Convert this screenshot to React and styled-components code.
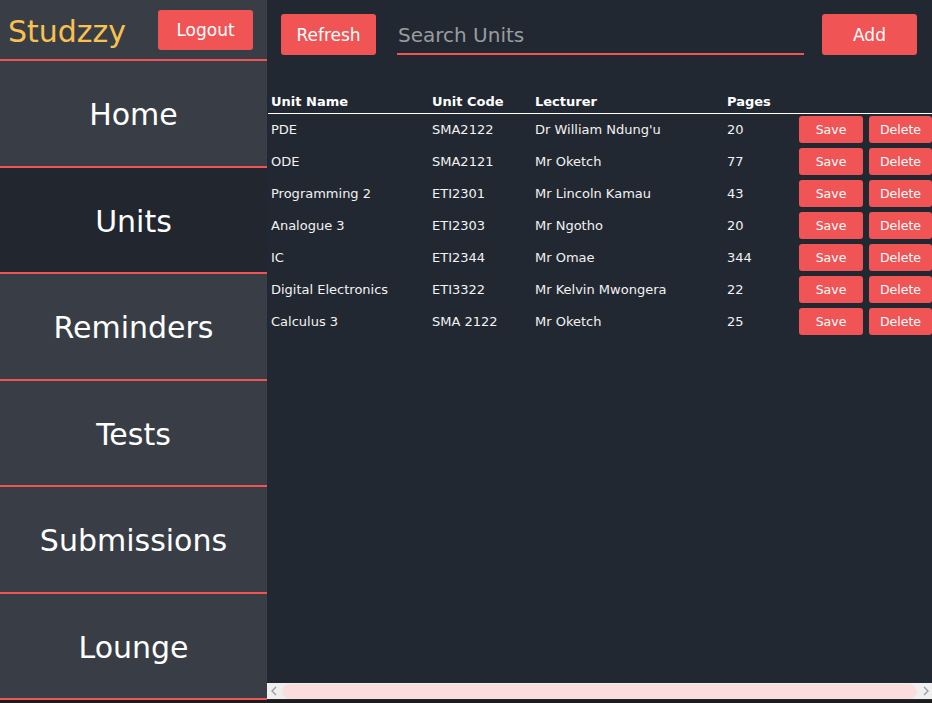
import React from "react";
import styled, { createGlobalStyle } from "styled-components";

const Global = createGlobalStyle`
  html, body { margin: 0; padding: 0; background: #1c1c1c; }
  body { font-family: "DejaVu Sans", Verdana, sans-serif; overflow: hidden; }
  * { box-sizing: border-box; }
`;

const RED = "#f05454";

const Shell = styled.div`
  display: flex;
  width: 932px;
  height: 700px;
`;

const Sidebar = styled.aside`
  width: 267px;
  flex-shrink: 0;
  display: flex;
  flex-direction: column;
  background: #393e46;
`;

const Brand = styled.header`
  height: 61px;
  flex-shrink: 0;
  display: flex;
  align-items: center;
  justify-content: space-between;
  padding: 0 14px 0 8px;
  border-bottom: 2px solid ${RED};
`;

const Logo = styled.h1`
  margin: 0;
  padding-top: 3px;
  font-size: 30px;
  font-weight: normal;
  color: #f9c24f;
`;

const Button = styled.button`
  font-family: inherit;
  border: none;
  border-radius: 3px;
  background: ${RED};
  color: #ffffff;
  cursor: pointer;
  font-size: ${(p) => p.$size || 17}px;
  width: ${(p) => p.$width}px;
  height: ${(p) => p.$height || 41}px;
  padding: ${(p) => (p.$small ? "1px 0 0" : "0")};
  flex-shrink: 0;
`;

const NavItem = styled.a`
  flex: 1;
  display: flex;
  align-items: center;
  justify-content: center;
  padding-top: 3px;
  font-size: 30px;
  color: #ffffff;
  text-decoration: none;
  border-bottom: 2px solid ${RED};
  background: ${(p) => (p.$active ? "#21262f" : "#393e46")};
`;

const Main = styled.main`
  flex: 1;
  min-width: 0;
  height: 700px;
  background: #222831;
  display: flex;
  flex-direction: column;
`;

const Viewport = styled.div`
  flex: 1;
  min-height: 0;
  overflow: hidden;
  padding-top: 14px;
`;

const ScrollTrack = styled.div`
  height: 16px;
  flex-shrink: 0;
  display: flex;
  align-items: center;
  background: #efefef;
  margin-bottom: 1px;
`;

const ScrollArrow = styled.div`
  width: 13px;
  height: 16px;
  flex-shrink: 0;
  display: flex;
  align-items: center;
  justify-content: center;
`;

const ScrollThumb = styled.div`
  flex: 1;
  height: 15px;
  margin: 0 2px;
  background: #fcdcdc;
  border: 1px solid #f4e2e2;
  border-radius: 8px;
`;

const Toolbar = styled.div`
  display: flex;
  align-items: center;
  width: 665px;
  padding: 0 15px 0 14px;
`;

const Search = styled.input`
  flex: 1;
  min-width: 0;
  margin: 0 18px 0 21px;
  height: 40px;
  padding: 3px 1px 0;
  background: transparent;
  border: none;
  border-bottom: 2px solid ${RED};
  outline: none;
  color: #ffffff;
  font-family: inherit;
  font-size: 20px;
  &::placeholder { color: #9a9ca0; }
`;

const Table = styled.table`
  margin: 34px 0 0 1px;
  width: 667px;
  table-layout: fixed;
  border-collapse: collapse;
  font-size: 13px;
  color: #f2f2f2;
  white-space: nowrap;
`;

const Th = styled.th`
  text-align: left;
  font-weight: bold;
  color: #ffffff;
  height: 24px;
  padding: 2px 3px 0;
  vertical-align: middle;
  border-bottom: 1px solid #ffffff;
  width: ${(p) => p.$w}px;
`;

const Td = styled.td`
  height: 32px;
  padding: 0 3px;
  vertical-align: middle;
`;

const Chevron = ({ dir }) => (
  <svg width="6" height="10" viewBox="0 0 6 10">
    <path
      d={dir === "left" ? "M5 1 L1 5 L5 9" : "M1 1 L5 5 L1 9"}
      fill="none"
      stroke="#9a9a9a"
      strokeWidth="1.3"
    />
  </svg>
);

const rows = [
  ["PDE", "SMA2122", "Dr William Ndung'u", "20"],
  ["ODE", "SMA2121", "Mr Oketch", "77"],
  ["Programming 2", "ETI2301", "Mr Lincoln Kamau", "43"],
  ["Analogue 3", "ETI2303", "Mr Ngotho", "20"],
  ["IC", "ETI2344", "Mr Omae", "344"],
  ["Digital Electronics", "ETI3322", "Mr Kelvin Mwongera", "22"],
  ["Calculus 3", "SMA 2122", "Mr Oketch", "25"],
];

const nav = ["Home", "Units", "Reminders", "Tests", "Submissions", "Lounge"];

export default function App() {
  return (
    <>
      <Global />
      <Shell>
        <Sidebar>
          <Brand>
            <Logo>Studzzy</Logo>
            <Button $width={95} $height={40}>Logout</Button>
          </Brand>
          {nav.map((n) => (
            <NavItem key={n} href="#" $active={n === "Units"}>
              {n}
            </NavItem>
          ))}
        </Sidebar>
        <Main>
          <Viewport>
            <Toolbar>
              <Button $width={95}>Refresh</Button>
              <Search placeholder="Search Units" />
              <Button $width={95}>Add</Button>
            </Toolbar>
            <Table>
              <thead>
                <tr>
                  <Th $w={161}>Unit Name</Th>
                  <Th $w={103}>Unit Code</Th>
                  <Th $w={192}>Lecturer</Th>
                  <Th $w={72}>Pages</Th>
                  <Th $w={70}></Th>
                  <Th $w={69}></Th>
                </tr>
              </thead>
              <tbody>
                {rows.map((r, i) => (
                  <tr key={i}>
                    <Td>{r[0]}</Td>
                    <Td>{r[1]}</Td>
                    <Td>{r[2]}</Td>
                    <Td>{r[3]}</Td>
                    <Td>
                      <Button $small $size={12.5} $height={27} $width={64}>Save</Button>
                    </Td>
                    <Td>
                      <Button $small $size={12.5} $height={27} $width={63}>Delete</Button>
                    </Td>
                  </tr>
                ))}
              </tbody>
            </Table>
          </Viewport>
          <ScrollTrack>
            <ScrollArrow><Chevron dir="left" /></ScrollArrow>
            <ScrollThumb />
            <ScrollArrow><Chevron dir="right" /></ScrollArrow>
          </ScrollTrack>
        </Main>
      </Shell>
    </>
  );
}
